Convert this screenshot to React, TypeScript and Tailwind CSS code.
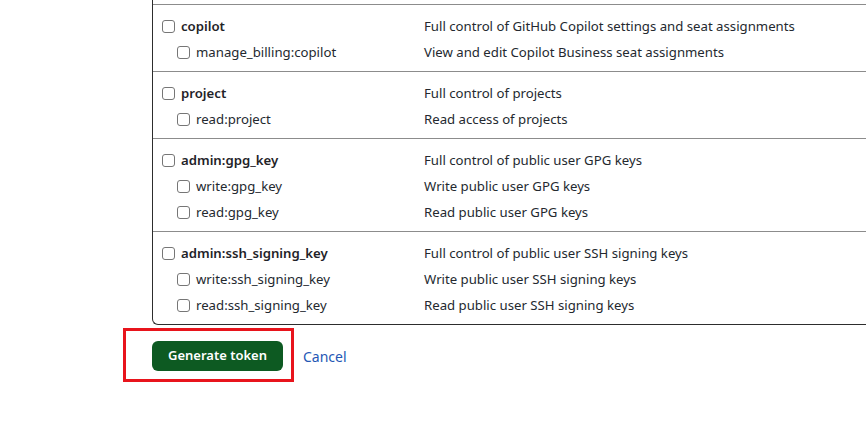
import React from "react";

interface Scope {
  name: string;
  desc: string;
  children: { name: string; desc: string }[];
}

const scopes: Scope[] = [
  {
    name: "copilot",
    desc: "Full control of GitHub Copilot settings and seat assignments",
    children: [
      { name: "manage_billing:copilot", desc: "View and edit Copilot Business seat assignments" },
    ],
  },
  {
    name: "project",
    desc: "Full control of projects",
    children: [{ name: "read:project", desc: "Read access of projects" }],
  },
  {
    name: "admin:gpg_key",
    desc: "Full control of public user GPG keys",
    children: [
      { name: "write:gpg_key", desc: "Write public user GPG keys" },
      { name: "read:gpg_key", desc: "Read public user GPG keys" },
    ],
  },
  {
    name: "admin:ssh_signing_key",
    desc: "Full control of public user SSH signing keys",
    children: [
      { name: "write:ssh_signing_key", desc: "Write public user SSH signing keys" },
      { name: "read:ssh_signing_key", desc: "Read public user SSH signing keys" },
    ],
  },
];

function Box() {
  return (
    <span className="inline-block w-[13px] h-[13px] rounded-[3px] border border-[#767676] bg-white shrink-0" />
  );
}

function Row({ name, desc, child }: { name: string; desc: string; child?: boolean }) {
  return (
    <div className="flex items-center h-[26px]">
      <div className={`flex items-center gap-[6px] w-[262px] ${child ? "pl-[15px]" : ""}`}>
        <Box />
        <span className={child ? "text-[#24292f]" : "font-semibold text-[#1f2328]"}>{name}</span>
      </div>
      <span className="text-[#24292f]">{desc}</span>
    </div>
  );
}

export default function App() {
  return (
    <div
      className="w-[866px] h-[444px] overflow-hidden bg-white text-[13.2px]"
      style={{ fontFamily: '"Noto Sans", "Open Sans", Arial, sans-serif' }}
    >
      <div className="pl-[152px]">
        <div className="border-l border-b border-[#2d2d2d] rounded-bl-[6px] w-[740px]">
          <div className="h-[4px]" />
          {scopes.map((s) => (
            <div key={s.name} className="border-t border-[#8c8c8c] pt-[9px] pb-[5px] pl-[9px]">
              <Row name={s.name} desc={s.desc} />
              {s.children.map((c) => (
                <Row key={c.name} name={c.name} desc={c.desc} child />
              ))}
            </div>
          ))}
        </div>
        <div className="flex items-center gap-[20px] mt-[16px]">
          <div className="relative">
            <button className="h-[30px] w-[131px] rounded-[6px] bg-[#0d5a22] text-white font-semibold text-[13px]">
              Generate token
            </button>
            <div className="absolute left-[-29px] top-[-13px] w-[171px] h-[54px] border-[3px] border-[#e8141c]" />
          </div>
          <span className="text-[#2457b5] text-[14px]">Cancel</span>
        </div>
      </div>
    </div>
  );
}
